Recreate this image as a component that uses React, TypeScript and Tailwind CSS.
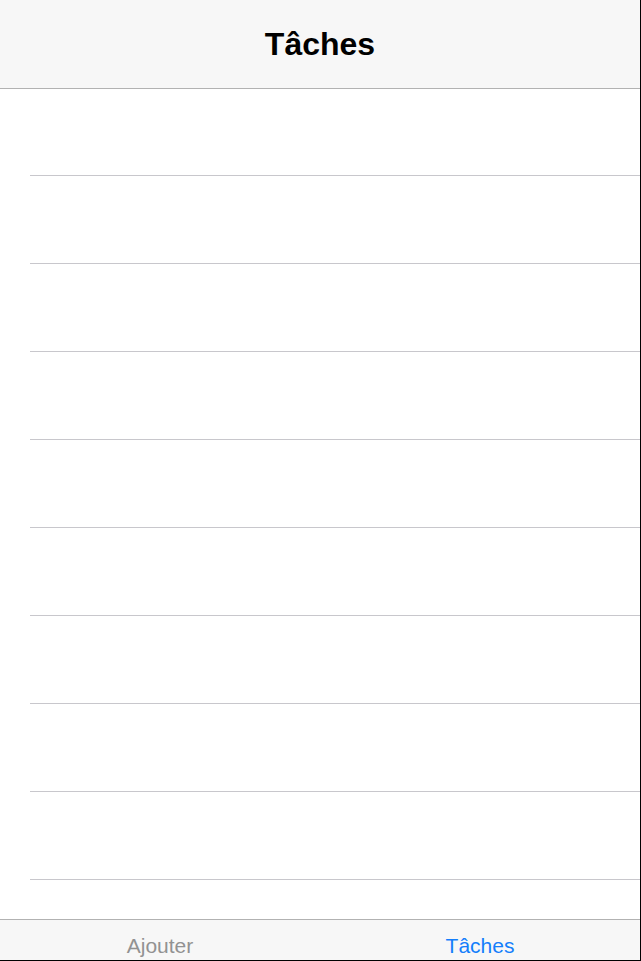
const ROWS = 10

export default function App() {
  return (
    <div
      className="w-[641px] h-[961px] flex flex-col border-r border-b border-black bg-white overflow-hidden"
      style={{ fontFamily: '"Liberation Sans", Arial, sans-serif' }}
    >
      {/* Barre de navigation */}
      <header className="h-[89px] shrink-0 bg-[#f7f7f7] border-b border-[#b2b2b2] pt-[26px] text-center">
        <h1 className="text-[32px] leading-[36px] font-bold text-black">Tâches</h1>
      </header>

      {/* Liste */}
      <div className="flex-1 overflow-hidden">
        {[...Array(ROWS)].map((_, i) => (
          <div key={i} className={`${i === 0 ? 'h-[87px]' : 'h-[88px]'} pl-[30px]`}>
            <div className="h-full border-b border-[#c8c7cc]" />
          </div>
        ))}
      </div>

      {/* Barre d'onglets */}
      <nav className="h-[41px] shrink-0 bg-[#f7f7f7] border-t border-[#b2b2b2] grid grid-cols-2 text-[21px] leading-[24px]">
        <div className="pt-[14px] text-center text-[#929292]">Ajouter</div>
        <div className="pt-[14px] text-center text-[#147efb]">Tâches</div>
      </nav>
    </div>
  )
}
